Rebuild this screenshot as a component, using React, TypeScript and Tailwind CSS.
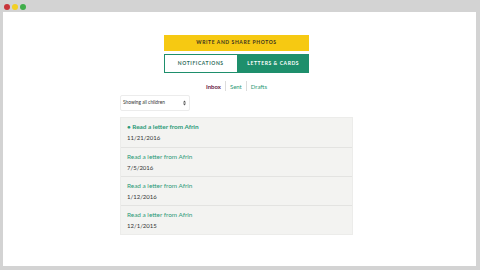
import React from 'react';

const letters = [
  { title: 'Read a letter from Afrin', date: '11/21/2016', unread: true },
  { title: 'Read a letter from Afrin', date: '7/5/2016', unread: false },
  { title: 'Read a letter from Afrin', date: '1/12/2016', unread: false },
  { title: 'Read a letter from Afrin', date: '12/1/2015', unread: false },
];

export default function App() {
  return (
    <div className="w-[480px] h-[270px] bg-[#d3d3d3] flex flex-col overflow-hidden" style={{ fontFamily: '"Lato", "Liberation Sans", sans-serif' }}>
      {/* Window chrome */}
      <div className="h-[12px] flex items-center gap-[2px] pl-[4px] pt-[2px]">
        <span className="w-[6px] h-[6px] rounded-full bg-[#c8343a]"></span>
        <span className="w-[6px] h-[6px] rounded-full bg-[#f2d024]"></span>
        <span className="w-[6px] h-[6px] rounded-full bg-[#3fae4a]"></span>
      </div>
      <div className="flex-1 bg-white ml-[3px] mr-[4px] mb-[4px] pr-[6px] flex flex-col items-center">
        <button className="mt-[23px] w-[145px] h-[16px] bg-[#f6c912] text-[#3a3320] text-[5px] font-bold tracking-[0.12em] flex items-center justify-center">
          WRITE AND SHARE PHOTOS
        </button>
        <div className="mt-[3px] w-[145px] h-[19px] flex">
          <button className="flex-1 border border-[#1e8f6c] text-[#2f6b5b] text-[5px] font-bold tracking-[0.12em] flex items-center justify-center">
            NOTIFICATIONS
          </button>
          <button className="flex-1 bg-[#1e8f6c] text-white text-[5px] font-bold tracking-[0.12em] flex items-center justify-center">
            LETTERS &amp; CARDS
          </button>
        </div>
        <div className="mt-[8px] flex items-center text-[6px] leading-[9px]">
          <span className="text-[#6b2547] font-bold pr-[4px]">Inbox</span>
          <span className="w-px h-[10px] bg-[#dcdcdc]"></span>
          <span className="text-[#2b9a78] px-[4px]">Sent</span>
          <span className="w-px h-[10px] bg-[#dcdcdc]"></span>
          <span className="text-[#2b9a78] pl-[4px]">Drafts</span>
        </div>
        <div className="w-[233px] mt-[4px]">
          <div className="w-[70px] h-[16px] border border-[#ececec] rounded-[2px] flex items-center justify-between pl-[2px] pr-[3px] text-[4.8px] text-[#333]">
            <span className="whitespace-nowrap">Showing all children</span>
            <svg width="3" height="6" viewBox="0 0 3 6" className="fill-[#555]">
              <path d="M0 2.5 L1.5 0.5 L3 2.5 Z" />
              <path d="M0 3.5 L1.5 5.5 L3 3.5 Z" />
            </svg>
          </div>
          <div className="mt-[6px] bg-[#f3f3f1] border border-[#ececea]">
            {letters.map((l, i) => (
              <div key={i} className={`h-[29px] px-[6px] flex flex-col justify-center gap-[3px] ${i > 0 ? 'border-t border-[#e3e3e1]' : ''}`}>
                <span className={`text-[6.4px] leading-[8px] text-[#2b9a78] ${l.unread ? 'font-bold' : ''}`}>
                  {l.unread ? '• ' : ''}{l.title}
                </span>
                <span className="text-[6px] leading-[8px] text-[#333]">{l.date}</span>
              </div>
            ))}
          </div>
        </div>
      </div>
    </div>
  );
}
